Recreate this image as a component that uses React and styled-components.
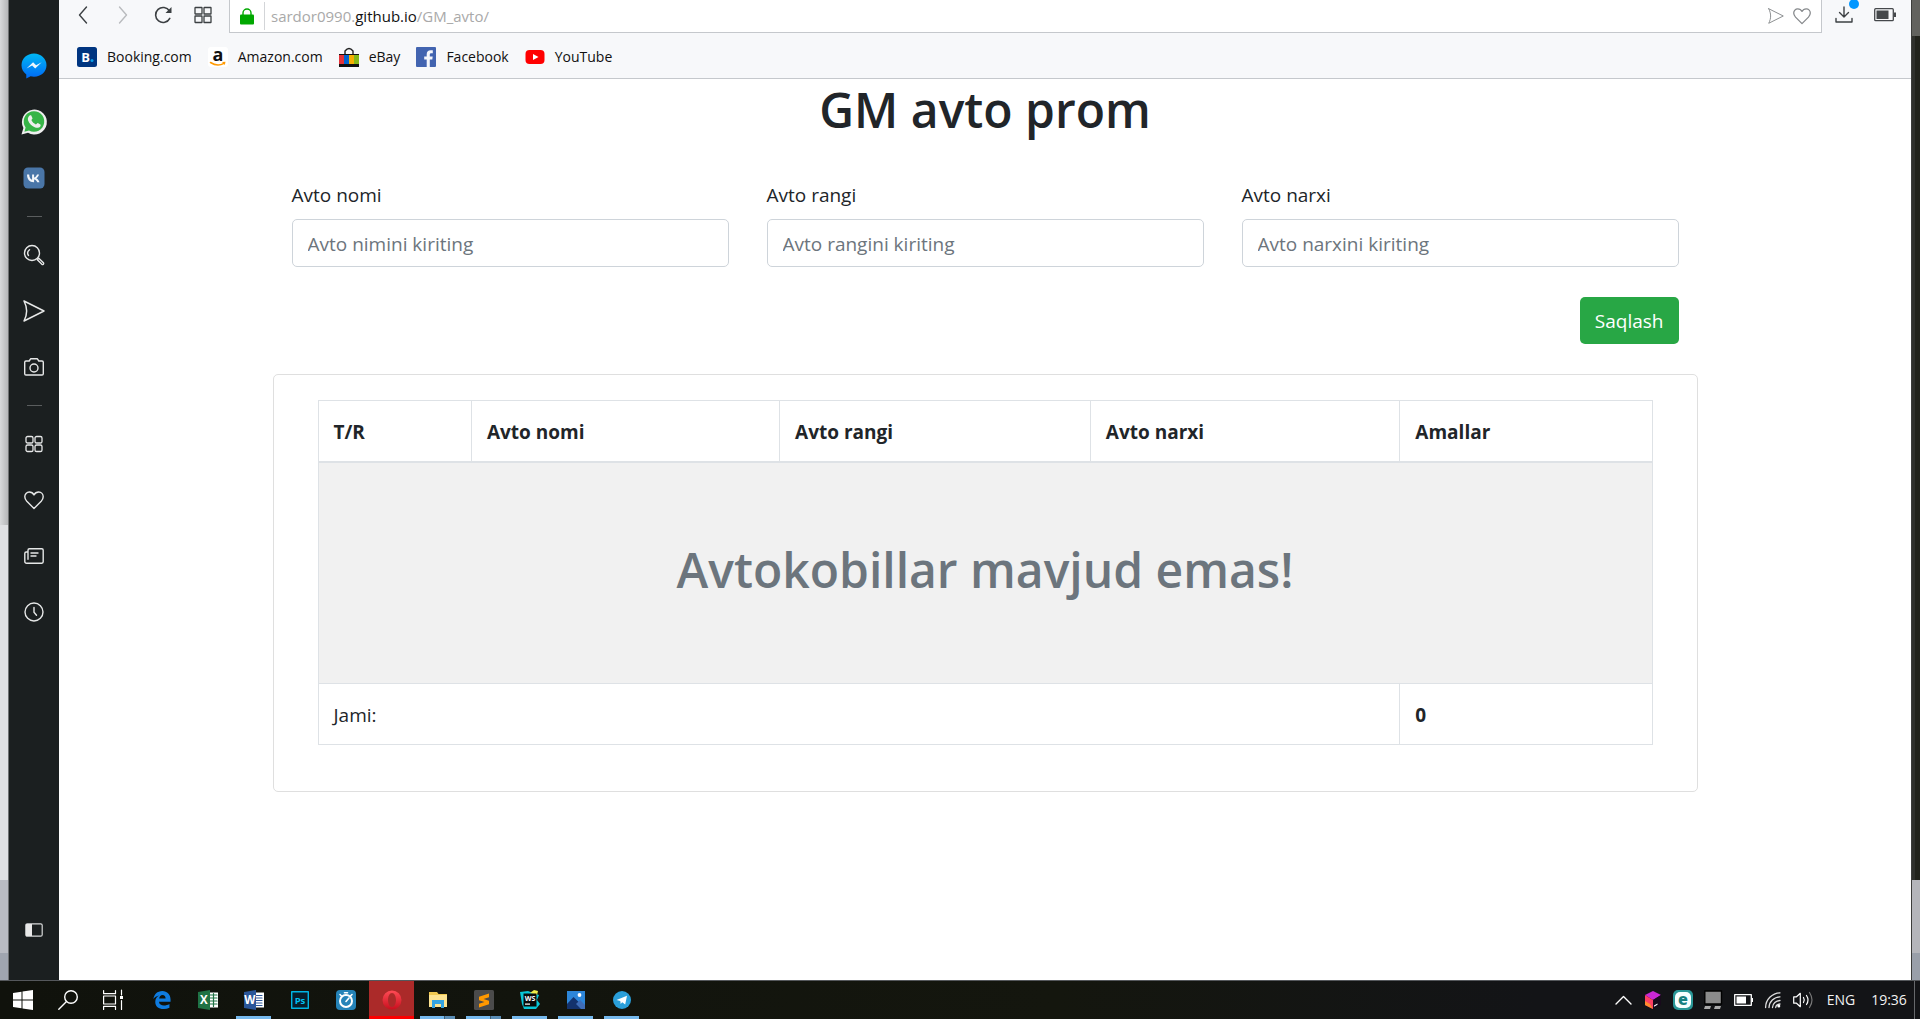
import React from 'react';
import styled, { createGlobalStyle } from 'styled-components';

const uiFont = '"Segoe UI", "Open Sans", "Noto Sans", sans-serif';

const GlobalStyle = createGlobalStyle`
  *, *::before, *::after { box-sizing: border-box; }
  body { margin: 0; font-family: ${uiFont}; color: #212529; background: #fff; }
  button { font-family: inherit; cursor: pointer; }
  svg { overflow: visible; }
`;

const Desktop = styled.div`
  display: grid;
  grid-template-rows: 1fr auto;
  min-height: 100vh;
`;

const WindowRow = styled.div`
  display: grid;
  grid-template-columns: 9px 1fr 9px;
  border-bottom: 1px solid #55585c;
`;

const LeftEdge = styled.div`
  display: grid;
  grid-template-rows: 525fr 355fr 73fr 27fr;
  border-right: 1px solid #6f7173;
`;

const RightEdge = styled.div`
  display: grid;
  grid-template-rows: 36fr 844fr 73fr 27fr;
  border-left: 1px solid #3c3d3b;
`;

const Backdrop = styled.div`
  background: ${(p) => p.$fill};
`;

const Browser = styled.div`
  display: grid;
  grid-template-columns: 50px 1fr;
  min-width: 0;
`;

const Sidebar = styled.nav`
  display: flex;
  flex-direction: column;
  align-items: center;
  padding: 38px 0 22px;
  background: #1b1f20;
`;

const SideButton = styled.button`
  display: grid;
  place-items: center;
  width: 50px;
  height: 56px;
  margin-top: ${(p) => (p.$last ? 'auto' : '0')};
  padding: 0;
  border: 0;
  background: none;
  color: #e6e7e7;
`;

const SideDivider = styled.hr`
  width: 15px;
  height: 1px;
  margin: 10px 0;
  border: 0;
  background: #5a5d5e;
`;

const Page = styled.div`
  display: flex;
  flex-direction: column;
  min-width: 0;
  background: #fff;
`;

const Chrome = styled.header`
  background: #f7f8fa;
  border-bottom: 1px solid #c5c8cc;
`;

const AddressRow = styled.div`
  display: flex;
  height: 33px;
`;

const NavButtons = styled.div`
  display: flex;
  width: 170px;
  padding-left: 4px;
`;

const ChromeButton = styled.button`
  display: grid;
  place-items: center;
  width: ${(p) => p.$width || 40}px;
  height: 29px;
  padding: 0;
  border: 0;
  background: none;
  color: ${(p) => p.$color || '#3c4043'};
`;

const AddressBar = styled.div`
  display: flex;
  flex: 1;
  align-items: center;
  padding: 0 6px 0 10px;
  border: solid #c5c8cc;
  border-width: 0 1px 1px;
  background: #fff;
`;

const Address = styled.div`
  flex: 1;
  margin-left: 10px;
  padding-left: 6px;
  border-left: 1px solid #d3d5d8;
  color: #a9a9a9;
  font-size: 15px;
  line-height: 28px;
`;

const Host = styled.span`
  color: #111;
`;

const ChromeTools = styled.div`
  display: flex;
  width: 89px;
  padding-left: 2px;
`;

const Bookmarks = styled.nav`
  display: flex;
  align-items: center;
  gap: 16px;
  height: 45px;
  padding: 2px 18px 0;
`;

const Bookmark = styled.a`
  display: flex;
  align-items: center;
  gap: 10px;
  color: #111;
  font-size: 14px;
  line-height: 20px;
  text-decoration: none;
`;

const Content = styled.main`
  width: 100%;
  max-width: 1425px;
  margin: 0 auto;
`;

const Title = styled.h1`
  margin: ${(p) => (p.$muted ? '60px 0 70px' : '0 0 40px')};
  padding-top: 2px;
  color: ${(p) => (p.$muted ? '#6c757d' : '#212529')};
  font-size: 48px;
  font-weight: 600;
  line-height: 58px;
  text-align: center;
`;

const Form = styled.form`
  display: grid;
  grid-template-columns: repeat(3, 1fr);
  column-gap: 38px;
  padding: 0 19px;
`;

const Field = styled.div`
  display: flex;
  flex-direction: column;
  gap: 8px;
`;

const Label = styled.label`
  font-size: 19px;
  line-height: 32px;
`;

const Input = styled.input`
  width: 100%;
  height: 48px;
  padding: 2px 15px 0;
  border: 1px solid #ced4da;
  border-radius: 5px;
  background: #fff;
  color: #495057;
  font-family: inherit;
  font-size: 19px;
  &::placeholder { color: #6c757d; opacity: 1; }
`;

const SaveButton = styled.button`
  grid-column: 3;
  justify-self: end;
  height: 47px;
  margin: 30px 0;
  padding: 0 15px;
  border: 0;
  border-radius: 5px;
  background: #28a745;
  color: #fff;
  font-size: 19px;
`;

const Card = styled.section`
  padding: 25px 44px 46px;
  border: 1px solid #dfdfdf;
  border-radius: 5px;
`;

const Table = styled.table`
  width: 100%;
  table-layout: fixed;
  border-collapse: collapse;
  font-size: 19px;
  line-height: 30px;
`;

const HeadCell = styled.th`
  width: ${(p) => p.$width}%;
  padding: 16px 15px 14px;
  border: 1px solid #dee2e6;
  border-bottom-width: 2px;
  text-align: left;
`;

const Cell = styled.td`
  padding: 16px 15px 14px;
  border: 1px solid #dee2e6;
  background: ${(p) => (p.$shaded ? '#f1f1f1' : '#fff')};
  font-weight: ${(p) => (p.$strong ? 700 : 400)};
`;

const Taskbar = styled.footer`
  display: flex;
  justify-content: space-between;
  height: 38px;
  background: linear-gradient(90deg, #10120c, #14160e 55%, #131417 80%, #131417);
`;

const TaskGroup = styled.div`
  display: flex;
  gap: ${(p) => p.$gap || 0}px;
`;

const TaskButton = styled.button`
  display: grid;
  place-items: center;
  width: 45px;
  height: 38px;
  padding: 0;
  border: 0;
  border-bottom: 3px solid ${(p) => (p.$active ? '#fb0000' : 'transparent')};
  border-top: 3px solid transparent;
  background: ${(p) => (p.$active ? '#ab2a29' : 'none')};
  background-clip: border-box;
  color: #fff;
`;

const RunningButton = styled(TaskButton)`
  border-bottom: 0;
  padding-bottom: 3px;
  background: ${(p) =>
    p.$stacked
      ? 'linear-gradient(90deg, #76b9ed 24px, #3d5c73 24px, #3d5c73 25px, #5a8db5 25px)'
      : 'linear-gradient(#76b9ed, #76b9ed)'}
    5px 100% / 35px 3px no-repeat;
`;

const Tray = styled.div`
  display: flex;
  align-items: center;
`;

const TrayButton = styled.button`
  display: grid;
  place-items: center;
  width: 30px;
  height: 38px;
  padding: 0;
  border: 0;
  background: none;
`;

const TrayText = styled.span`
  width: ${(p) => p.$width}px;
  color: #f2f2f2;
  font-size: 14px;
  line-height: 38px;
  text-align: center;
`;

const ShowDesktop = styled.button`
  width: 6px;
  height: 38px;
  padding: 0;
  border: 0;
  border-left: 1px solid #66686b;
  background: none;
`;

const Svg = ({ w = 20, h = w, vb = `0 0 ${w} ${h}`, line, sw = 1.4, children }) => (
  <svg
    width={w}
    height={h}
    viewBox={vb}
    fill={line ? 'none' : 'currentColor'}
    stroke={line ? 'currentColor' : 'none'}
    strokeWidth={sw}
    strokeLinecap="round"
    strokeLinejoin="round"
    aria-hidden="true"
  >
    {children}
  </svg>
);

const glyph = { fontFamily: '"Open Sans", sans-serif', fontWeight: 700, textAnchor: 'middle' };

/* Sidebar icons */
const Messenger = () => (
  <Svg w={26}>
    <defs>
      <linearGradient id="msg" x2="0" y2="1"><stop stopColor="#00b8f5" /><stop offset="1" stopColor="#0068f5" /></linearGradient>
    </defs>
    <path fill="url(#msg)" d="M13 .5C6 .5.5 5.600.5 12.200c0 3.800 1.800 7 4.800 9.200v4.200l4.300-2.400c1.100.3 2.200.5 3.400.5 7 0 12.500-5.100 12.500-11.500S20 .5 13 .5z" />
    <path fill="#eef6fc" d="M5.500 15.500l6.600-6.200 3 2.900 5.600-2.900-6.500 6.300-3.100-3z" />
  </Svg>
);
const Whatsapp = () => (
  <Svg w={26}>
    <path fill="#eee" d="M.5 25.500l1.900-6.500A12.500 12.500 0 1 1 7 23.800z" />
    <path fill="#36b447" d="M3.400 22.700l1.200-4.200A10.300 10.300 0 1 1 8 21.500z" />
    <path fill="#eee" d="M8.600 6.600c.5-.5 1.500-.5 1.800.1l1.100 2.600c.2.600-1.200 1.500-1 2 .8 1.800 2.400 3.200 4.400 4.100.5.200 1.300-1.500 1.900-1.300l2.600 1.300c.5.300.2 1.700-.3 2.300-1 1.100-2.900 1.500-4.900.8-3.300-1.100-6-3.700-7.100-6.900-.7-1.900.2-3.900 1.500-5z" />
  </Svg>
);
const Vk = () => (
  <Svg w={22}>
    <rect x=".5" y=".5" width="21" height="21" rx="4.500" fill="#4a76a8" />
    <path fill="#f3f6fa" d="M10.700 15.200c-4.200 0-6.600-2.900-6.700-7.700h2.200c.1 3.500 1.600 5 2.900 5.300V7.500h2v3c1.200-.1 2.500-1.500 2.900-3h2c-.3 1.800-1.700 3.200-2.700 3.800 1 .5 2.500 1.700 3.200 3.900h-2.300c-.5-1.400-1.600-2.500-3.100-2.700v2.700z" />
  </Svg>
);
const Search = () => (
  <Svg w={22} line>
    <circle cx="9" cy="9" r="7.500" />
    <path d="M5.500 11.500c-1.300-2-.7-4.500 1-5.800M14.300 15.700l1.500-1.500 4.600 4.500c.6.600.1 1.900-.6 1.900-.3.100-.6-.1-.9-.3z" />
  </Svg>
);
const Send = ({ size = 22 }) => (
  <Svg w={size} vb="0 0 22 22" line sw={size < 20 ? 1.3 : 1.5}><path d="M1 1l20 10L1 21c3.500-6.600 3.500-13.400 0-20z" /></Svg>
);
const Camera = () => (
  <Svg w={22} line>
    <path d="M3 5h3.200l1.400-2.200h6.800L15.800 5H19c.8 0 1.300.6 1.300 1.300v11.400c0 .8-.6 1.300-1.300 1.300H3c-.8 0-1.300-.6-1.300-1.300V6.300C1.700 5.600 2.300 5 3 5z" />
    <circle cx="11" cy="12" r="4" />
  </Svg>
);
const Grid4 = ({ size = 18, r = 1.6 }) => (
  <Svg w={size} vb="0 0 18 18" line sw={1.3}>
    <rect x="1" y="1.500" width="7" height="6.500" rx={r} /><rect x="10" y="1.500" width="7" height="6.500" rx={r} />
    <rect x="1" y="10" width="7" height="6.500" rx={r} /><rect x="10" y="10" width="7" height="6.500" rx={r} />
  </Svg>
);
const Heart = ({ size = 20 }) => (
  <Svg w={size} vb="0 0 20 20" line sw={1.4}>
    <path d="M10 18.500L2.800 11.300C1.500 9.900.8 8.500.8 6.800.8 4.200 2.700 2 5.300 2 7.300 2 9 3 10 4.900 11 3 12.700 2 14.700 2c2.600 0 4.500 2.200 4.500 4.800 0 1.700-.7 3.100-2 4.500z" />
  </Svg>
);
const News = () => (
  <Svg w={20} line>
    <path d="M4 4.200C4 3.200 4.600 2.800 5.400 2.800h12.400c.9 0 1.400.6 1.400 1.400v11.600c0 .8-.6 1.400-1.400 1.400H2.600c-1.100 0-1.800-.7-1.800-1.600V7.400c0-.9.6-1.400 1.400-1.400H4M4 4.200v9M7 7h7M7 10h5" />
  </Svg>
);
const History = () => <Svg w={20} line><circle cx="10" cy="10" r="9" /><path d="M10 5.500v4.700l2.500 3" /></Svg>;
const Panel = () => (
  <Svg w={18} h={14}><rect x=".8" y=".8" width="16.400" height="12.400" rx="1.500" fill="none" stroke="#d8d9d9" strokeWidth="1.200" /><path fill="#e8e8e8" d="M1 1h6v12H1z" /></Svg>
);

/* Toolbar icons */
const Back = () => <Svg w={10} h={18} line><path d="M8.500 1L1.500 9l7 8" /></Svg>;
const Forward = () => <Svg w={10} h={18} line><path d="M1.500 1l7 8-7 8" /></Svg>;
const Reload = () => <Svg w={18} line sw={1.6}><path d="M15.800 12.400A7.500 7.500 0 1 1 15.500 5" /><path fill="currentColor" stroke="none" d="M17.500 1v6h-6z" /></Svg>;
const Lock = () => (
  <Svg w={14} h={17}><path fill="none" stroke="#00a800" strokeWidth="1.400" d="M3 8V5a4 4 0 0 1 8 0v3" /><rect y="6.500" width="14" height="10" rx="1" fill="#00a800" /></Svg>
);
const Download = () => (
  <Svg w={22} h={29} line>
    <path d="M8 7v10M3.500 12.500L8 17l4.500-4.500M0 18.500V22h16v-3.500" />
    <circle cx="18" cy="4" r="5" fill="#0096ff" stroke="none" />
  </Svg>
);
const Battery = ({ color = '#45484b', w = 22, h = 14 }) => (
  <Svg w={w} h={h} vb="0 0 22 14">
    <rect x=".7" y=".7" width="18.600" height="12" rx="1" fill="none" stroke={color} strokeWidth="1.300" />
    <path fill={color} d="M2.500 2.500h12v8.500h-12zM20 4.500h2v4.500h-2z" />
  </Svg>
);

/* Bookmark icons */
const BookingIcon = () => (
  <Svg w={20}><rect x="2" width="16" height="20" rx="2.500" fill="#003580" /><rect width="20" height="20" rx="2.500" fill="#003580" /><text x="8.500" y="15" fontSize="13" fill="#fff" style={glyph}>B</text><circle cx="15" cy="13.500" r="1.500" fill="#0a9fe8" /></Svg>
);
const AmazonIcon = () => (
  <Svg w={20}><rect width="20" height="20" rx="3" fill="#fff" /><text x="10" y="13.500" fontSize="18" fill="#111" style={glyph}>a</text><path d="M2.500 15.500q7 4.500 13.500.8" fill="none" stroke="#f90" strokeWidth="1.500" /><path fill="#f90" d="M14 15l3.500-.3-.7 3.400z" /></Svg>
);
const EbayIcon = () => (
  <Svg w={20}><path d="M6 7V4q4-5 8 0v3" fill="none" stroke="#222" strokeWidth="1.400" /><path fill="#111" d="M0 7h20v13H0z" /><path fill="#e53238" d="M0 8h5v9H0z" /><path fill="#0064d2" d="M5 8h5v9H5z" /><path fill="#f5af02" d="M10 8h5v9h-5z" /><path fill="#86b817" d="M15 8h5v9h-5z" /></Svg>
);
const FacebookIcon = () => (
  <Svg w={20}><rect width="20" height="20" rx="1" fill="#4264b0" /><path fill="#f4f6fb" d="M10.700 20v-7.500H8.200V9.400h2.500V7.200c0-2.600 1.500-4 3.900-4l2.200.1v2.900h-1.500c-1.200 0-1.500.6-1.500 1.500v1.700h2.900l-.4 3.100h-2.500V20z" /></Svg>
);
const YoutubeIcon = () => <Svg w={20}><rect x=".5" y="3" width="19" height="14" rx="4" fill="#f00" /><path fill="#fff" d="M8 7l5.500 3L8 13z" /></Svg>;

/* Taskbar icons */
const Windows = () => <Svg w={20}><path fill="#fff" d="M0 3l8.500-1.200v7.700H0zM9.500 1.600L20 0v9.500H9.500zM0 10.500h8.500v7.700L0 17zM9.500 10.500H20V20L9.500 18.400z" /></Svg>;
const TaskSearch = () => <Svg w={20} line><circle cx="13" cy="7" r="6.300" /><path d="M8.500 11.500L.8 19.200" /></Svg>;
const TaskView = () => (
  <Svg w={20}><g fill="none" stroke="#fff" strokeWidth="1.200"><path d="M.6.500v3.200h11.900V.5M.6 19.500v-3.200h11.900v3.200M.6 6h11.900v8H.6zM18.500 0v5M18.500 10.500V19.500" /></g><path fill="#fff" d="M17 6h3v3h-3z" /></Svg>
);
const Edge = () => (
  <Svg w={18} vb="0 0 24 24"><path fill="#0f7ce0" d="M.5 10.700C1.300 4.800 5.600 0 12.400 0 19 0 23.400 4.800 23.400 11.400v3H8c.1 3.500 3.200 5 6.500 5 2.700 0 5.200-.7 7.400-2v5c-2.500 1.200-5.200 1.700-7.900 1.600C7.600 23.900 3 20.400 3 14.500c0-4 2-7 5.200-8.600C4.800 6.300 2.100 8.300.5 10.700zM8.200 10h8.600c0-3-1.500-4.800-4.100-4.800-2.500 0-4 1.800-4.500 4.800z" /></Svg>
);
const Office = ({ color, letter }) => (
  <Svg w={20}><path fill="#fff" d="M10 2.500h10v15H10z" />
    {letter === 'X'
      ? <path d="M12 5h7M12 8h7M12 11h7M12 14h7M15.500 3.500v13" fill="none" stroke={color} strokeWidth="1.200" />
      : <path d="M12 5.500h6M12 8h6M12 10.500h6M12 13h6M12 15.500h6" fill="none" stroke={color} strokeWidth="1.200" />}
    <path fill={color} d="M0 2l12-2v20L0 18z" /><text x="5.800" y="14.200" fontSize="11.500" fill="#fff" style={glyph}>{letter}</text>
  </Svg>
);
const Photoshop = () => <Svg w={18}><rect x=".7" y=".7" width="16.600" height="16.600" fill="#071d2b" stroke="#00b4e4" strokeWidth="1.400" /><text x="9" y="12.500" fontSize="9.500" fill="#00c0f0" style={glyph}>Ps</text></Svg>;
const Timer = () => (
  <Svg w={20}><rect width="20" height="20" rx="4" fill="#2583b8" /><circle cx="10" cy="11" r="6" fill="none" stroke="#fff" strokeWidth="2" /><path d="M8.500 2.800h3M4 4.500l1.300 1.300M16 4.500l-1.300 1.300M10 11.500l3-3.500" fill="none" stroke="#fff" strokeWidth="1.600" /></Svg>
);
const Opera = () => (
  <Svg w={20}><defs><linearGradient id="op" x2="0" y2="1"><stop stopColor="#ff4b55" /><stop offset="1" stopColor="#c80f1e" /></linearGradient></defs><path fill="url(#op)" fillRule="evenodd" d="M10 .5a9.500 9.500 0 1 1 0 19 9.500 9.500 0 0 1 0-19zm0 2.500C7.500 3 6 6.500 6 10s1.500 7 4 7 4-3.500 4-7-1.500-7-4-7z" /></Svg>
);
const Folder = () => (
  <Svg w={20}><path fill="#f0c850" d="M1 2h8l1.500 2H19v4H1z" /><path fill="#fde391" d="M1 5h18v12H1z" /><path fill="#35a4e2" d="M4 10h12v8h-3v-4H7v4H4z" /></Svg>
);
const Sublime = () => <Svg w={20}><rect width="20" height="20" rx="1.500" fill="#4b4b4b" /><path fill="#ff9800" d="M15 3.500v3.700l-5.500 1.700 5.500 1.800v3.500L5 17.500v-3.700L10.500 12 5 10.200V6.700z" /></Svg>;
const Webstorm = () => (
  <Svg w={20}><path fill="#08c6d8" d="M0 2l8-1 5 2 6 2-2 5 3 4-4 5H4L2 14z" /><path fill="#f1ee49" d="M10 3l4-3 4 1-1 4z" /><path fill="#0a0a0a" d="M3.500 3.500h13v13h-13z" /><text x="10" y="10.500" fontSize="7" fill="#fff" style={glyph}>WS</text><path fill="#fff" d="M5 13.500h5v1.200H5z" /></Svg>
);
const Photos = () => (
  <Svg w={18}><path fill="#2d86d9" d="M0 0h18v18H0z" /><path fill="#13326d" d="M0 13l6.500-7L18 17v1H0z" /><path fill="#3f6db8" d="M9 13l4-4 5 5v4h-4z" /><circle cx="12.500" cy="4" r="1.900" fill="#fff" /></Svg>
);
const Telegram = () => <Svg w={18}><circle cx="9" cy="9" r="9" fill="#2a9fda" /><path fill="#fff" d="M3.500 9L14 4.700l-1.800 8.800-3-2.200-1.500 1.600-.4-2.800z" /></Svg>;

/* Notification area icons */
const Chevron = () => <Svg w={17} h={10}><path d="M1 9l7.500-7.500L16 9" fill="none" stroke="#fff" strokeWidth="1.400" /></Svg>;
const Cube = () => (
  <Svg w={18}><path fill="#c928d5" d="M9 0l8 4-8 5-8-5z" /><path fill="#fc3f64" d="M1 4l8 5v9l-8-4z" /><path fill="#ff8a2d" d="M1 10l5 3 3 5-8-4z" /><path fill="#180a1c" d="M17 4v10l-8 4V9z" /><path fill="#fff" d="M10 14.500l3.500-2v1.200L10 15.700z" /></Svg>
);
const Eset = () => (
  <Svg w={20}><rect width="20" height="20" rx="5" fill="#2a9797" /><rect x="2" y="2" width="16" height="16" rx="5" fill="#f7ffff" /><text x="10" y="14.500" fontSize="16" fill="#187f80" style={{ ...glyph, fontWeight: 800 }}>e</text></Svg>
);
const Network = () => <Svg w={18} h={20}><path fill="#8b8b8b" stroke="#000" d="M.8 1h16.700v13H.8z" /><path fill="#aaa" d="M1 16h6l-1 3H0zM11 16h6l-1 3h-6z" /></Svg>;
const TrayBattery = () => <Svg w={19} h={12}><rect x=".7" y=".7" width="16.600" height="10.600" fill="none" stroke="#fff" strokeWidth="1.300" /><path fill="#fff" d="M2.500 2.500h9.500v7H2.500zM18 4h1v4h-1z" /></Svg>;
const Wifi = () => (
  <Svg w={16}><g fill="none" stroke="#ddd" strokeWidth="1.300"><path d="M.6 15.500C.6 7.500 7 1 15 .8M4 15.500C4.200 9.500 9 5 15 4.800M7.500 15.500c.2-4 3.500-6.800 7.500-7M10.700 15.500c.2-2 1.800-3.300 4.300-3.500" /></g><circle cx="13.800" cy="14" r="1.500" fill="#fff" /></Svg>
);
const Speaker = () => (
  <Svg w={20} h={18}><path d="M.7 5.800h2.800L7.300 2.300v13.400l-3.800-3.500H.7z" fill="none" stroke="#fff" strokeWidth="1.200" /><g fill="none" stroke="#fff" strokeWidth="1.200"><path d="M10.500 6.500q1.500 2.500 0 5M13.500 4.500q3 4.500 0 9" /><path stroke="#777" d="M16.500 1.500q5 7.500 0 15" /></g></Svg>
);

const sideTools = [
  [['Messenger', Messenger], ['WhatsApp', Whatsapp], ['VK', Vk]],
  [['Search', Search], ['My Flow', Send], ['Snapshot', Camera]],
  [['Speed Dial', Grid4], ['Bookmarks', Heart], ['News', News], ['History', History]],
];

const bookmarks = [
  ['Booking.com', BookingIcon, 'https://www.booking.com'],
  ['Amazon.com', AmazonIcon, 'https://www.amazon.com'],
  ['eBay', EbayIcon, 'https://www.ebay.com'],
  ['Facebook', FacebookIcon, 'https://www.facebook.com'],
  ['YouTube', YoutubeIcon, 'https://www.youtube.com'],
];

const fields = [
  ['nomi', 'Avto nomi', 'Avto nimini kiriting'],
  ['rangi', 'Avto rangi', 'Avto rangini kiriting'],
  ['narxi', 'Avto narxi', 'Avto narxini kiriting'],
];

const columns = [['T/R', 11.5], ['Avto nomi', 23.1], ['Avto rangi', 23.3], ['Avto narxi', 23.2], ['Amallar', 18.9]];

const tray = [['Hidden icons', Chevron], ['Toolbox', Cube], ['ESET', Eset], ['Network', Network], ['Battery', TrayBattery], ['Wi-Fi', Wifi], ['Volume', Speaker]];

export default function App() {
  return (
    <>
      <GlobalStyle />
      <Desktop>
        <WindowRow>
          <LeftEdge>
            <Backdrop $fill="linear-gradient(90deg, #d8d9db, #b5b6b8)" />
            <Backdrop $fill="#dfe0e3" />
            <Backdrop $fill="#b9bbc2" />
            <Backdrop $fill="#a0a5af" />
          </LeftEdge>
          <Browser>
            <Sidebar aria-label="Sidebar">
              {sideTools.map((group, i) => (
                <React.Fragment key={i}>
                  {i > 0 && <SideDivider />}
                  {group.map(([name, Icon]) => (
                    <SideButton key={name} aria-label={name}><Icon /></SideButton>
                  ))}
                </React.Fragment>
              ))}
              <SideButton $last aria-label="Sidebar setup"><Panel /></SideButton>
            </Sidebar>
            <Page>
              <Chrome>
                <AddressRow>
                  <NavButtons>
                    <ChromeButton aria-label="Back"><Back /></ChromeButton>
                    <ChromeButton aria-label="Forward" $color="#b9bbbe"><Forward /></ChromeButton>
                    <ChromeButton aria-label="Reload"><Reload /></ChromeButton>
                    <ChromeButton aria-label="Start page"><Grid4 r={0.3} /></ChromeButton>
                  </NavButtons>
                  <AddressBar>
                    <Lock />
                    <Address>sardor0990.<Host>github.io</Host>/GM_avto/</Address>
                    <ChromeButton aria-label="Send to My Flow" $width={26} $color="#85888b"><Send size={16} /></ChromeButton>
                    <ChromeButton aria-label="Add to bookmarks" $width={26} $color="#85888b"><Heart size={18} /></ChromeButton>
                  </AddressBar>
                  <ChromeTools>
                    <ChromeButton aria-label="Downloads" $width={46}><Download /></ChromeButton>
                    <ChromeButton aria-label="Battery saver" $width={30}><Battery /></ChromeButton>
                  </ChromeTools>
                </AddressRow>
                <Bookmarks aria-label="Bookmarks bar">
                  {bookmarks.map(([name, Icon, href]) => (
                    <Bookmark key={name} href={href}><Icon />{name}</Bookmark>
                  ))}
                </Bookmarks>
              </Chrome>
              <Content>
                <Title>GM avto prom</Title>
                <Form onSubmit={(e) => e.preventDefault()}>
                  {fields.map(([id, label, hint]) => (
                    <Field key={id}>
                      <Label htmlFor={id}>{label}</Label>
                      <Input id={id} type="text" placeholder={hint} />
                    </Field>
                  ))}
                  <SaveButton type="submit">Saqlash</SaveButton>
                </Form>
                <Card>
                  <Table>
                    <thead>
                      <tr>{columns.map(([name, width]) => <HeadCell key={name} $width={width}>{name}</HeadCell>)}</tr>
                    </thead>
                    <tbody>
                      <tr><Cell colSpan={5} $shaded><Title as="h2" $muted>Avtokobillar mavjud emas!</Title></Cell></tr>
                    </tbody>
                    <tfoot>
                      <tr><Cell colSpan={4}>Jami:</Cell><Cell $strong>0</Cell></tr>
                    </tfoot>
                  </Table>
                </Card>
              </Content>
            </Page>
          </Browser>
          <RightEdge>
            <Backdrop $fill="#62625e" />
            <Backdrop $fill="linear-gradient(90deg, #30312d 3px, #22231c 3px)" />
            <Backdrop $fill="#b4b5ba" />
            <Backdrop $fill="#999fa9" />
          </RightEdge>
        </WindowRow>
        <Taskbar>
          <TaskGroup $gap={4}>
            <TaskGroup>
              <TaskButton aria-label="Start"><Windows /></TaskButton>
              <TaskButton aria-label="Search"><TaskSearch /></TaskButton>
              <TaskButton aria-label="Task view"><TaskView /></TaskButton>
            </TaskGroup>
            <TaskGroup $gap={1}>
              <TaskButton aria-label="Edge"><Edge /></TaskButton>
              <TaskButton aria-label="Excel"><Office color="#1f7244" letter="X" /></TaskButton>
              <RunningButton aria-label="Word"><Office color="#2a5699" letter="W" /></RunningButton>
              <TaskButton aria-label="Photoshop"><Photoshop /></TaskButton>
              <TaskButton aria-label="Timer"><Timer /></TaskButton>
              <TaskButton $active aria-label="Opera"><Opera /></TaskButton>
              <RunningButton $stacked aria-label="Explorer"><Folder /></RunningButton>
              <RunningButton $stacked aria-label="Sublime Text"><Sublime /></RunningButton>
              <RunningButton aria-label="WebStorm"><Webstorm /></RunningButton>
              <RunningButton aria-label="Photos"><Photos /></RunningButton>
              <RunningButton aria-label="Telegram"><Telegram /></RunningButton>
            </TaskGroup>
          </TaskGroup>
          <TaskGroup>
            <Tray>
              {tray.map(([name, Icon]) => <TrayButton key={name} aria-label={name}><Icon /></TrayButton>)}
              <TrayText $width={46}>ENG</TrayText>
              <TrayText $width={50}>19:36</TrayText>
            </Tray>
            <ShowDesktop aria-label="Show desktop" />
          </TaskGroup>
        </Taskbar>
      </Desktop>
    </>
  );
}
